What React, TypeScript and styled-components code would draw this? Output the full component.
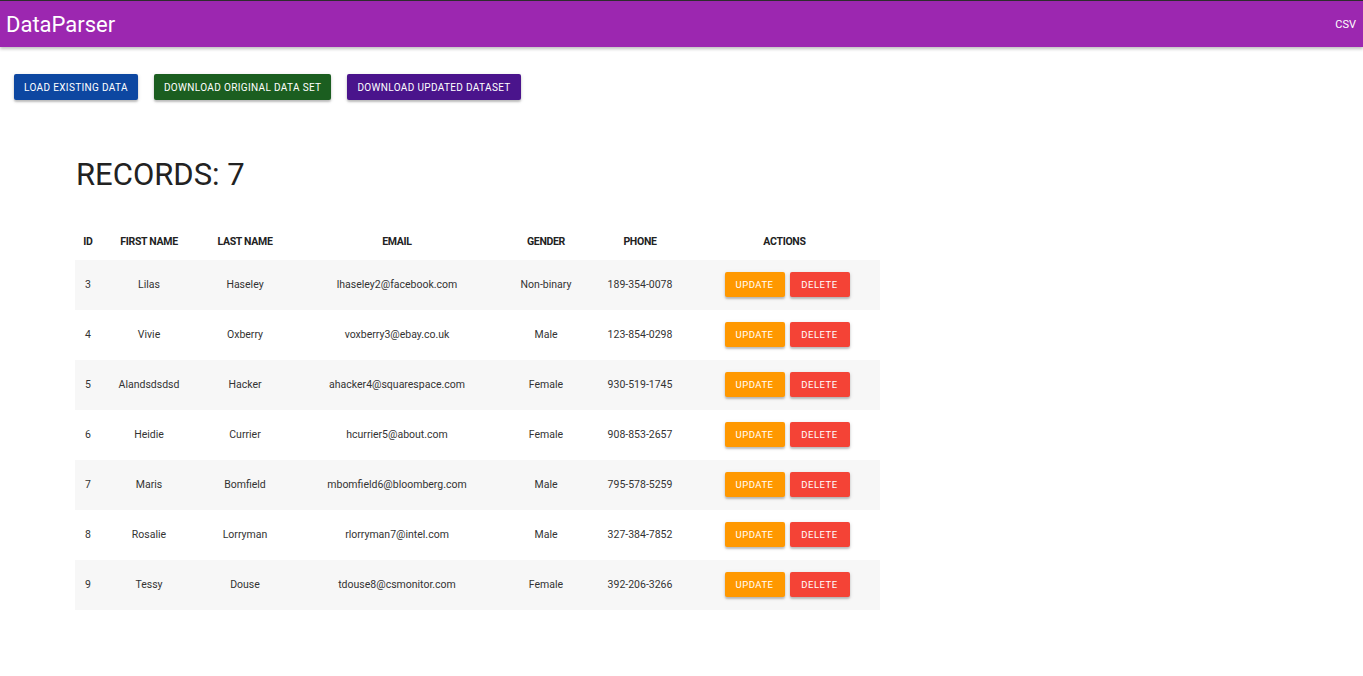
import styled, { createGlobalStyle } from "styled-components";

const GlobalStyle = createGlobalStyle`
  html, body {
    margin: 0;
    padding: 0;
    background: #ffffff;
    font-family: Roboto, "Noto Sans", sans-serif;
  }
`;

type Person = {
  id: number;
  firstName: string;
  lastName: string;
  email: string;
  gender: string;
  phone: string;
};

const records: Person[] = [
  { id: 3, firstName: "Lilas", lastName: "Haseley", email: "lhaseley2@facebook.com", gender: "Non-binary", phone: "189-354-0078" },
  { id: 4, firstName: "Vivie", lastName: "Oxberry", email: "voxberry3@ebay.co.uk", gender: "Male", phone: "123-854-0298" },
  { id: 5, firstName: "Alandsdsdsd", lastName: "Hacker", email: "ahacker4@squarespace.com", gender: "Female", phone: "930-519-1745" },
  { id: 6, firstName: "Heidie", lastName: "Currier", email: "hcurrier5@about.com", gender: "Female", phone: "908-853-2657" },
  { id: 7, firstName: "Maris", lastName: "Bomfield", email: "mbomfield6@bloomberg.com", gender: "Male", phone: "795-578-5259" },
  { id: 8, firstName: "Rosalie", lastName: "Lorryman", email: "rlorryman7@intel.com", gender: "Male", phone: "327-384-7852" },
  { id: 9, firstName: "Tessy", lastName: "Douse", email: "tdouse8@csmonitor.com", gender: "Female", phone: "392-206-3266" },
];

const columns = [
  { label: "ID", width: 26 },
  { label: "FIRST NAME", width: 96 },
  { label: "LAST NAME", width: 96 },
  { label: "EMAIL", width: 208 },
  { label: "GENDER", width: 90 },
  { label: "PHONE", width: 98 },
  { label: "ACTIONS", width: 191 },
];

const App = () => {
  return (
    <Page>
      <GlobalStyle />
      <AppBar>
        <Brand>DataParser</Brand>
        <NavLink>CSV</NavLink>
      </AppBar>
      <Toolbar>
        <RaisedButton tone="#0d47a1">Load existing data</RaisedButton>
        <RaisedButton tone="#1b5e20">Download original data set</RaisedButton>
        <RaisedButton tone="#4a148c">Download updated dataset</RaisedButton>
      </Toolbar>
      <Content>
        <Heading>RECORDS: {records.length}</Heading>
        <Table>
          <colgroup>
            {columns.map((c) => (
              <col key={c.label} style={{ width: c.width }} />
            ))}
          </colgroup>
          <thead>
            <tr>
              {columns.map((c) => (
                <HeadCell key={c.label}>{c.label}</HeadCell>
              ))}
            </tr>
          </thead>
          <tbody>
            {records.map((r) => (
              <Row key={r.id}>
                <Cell>{r.id}</Cell>
                <Cell>{r.firstName}</Cell>
                <Cell>{r.lastName}</Cell>
                <Cell>{r.email}</Cell>
                <Cell>{r.gender}</Cell>
                <Cell>{r.phone}</Cell>
                <Cell>
                  <Actions>
                    <SmallButton tone="#ff9800">Update</SmallButton>
                    <SmallButton tone="#f44336">Delete</SmallButton>
                  </Actions>
                </Cell>
              </Row>
            ))}
          </tbody>
        </Table>
      </Content>
    </Page>
  );
};

const Page = styled.div`
  min-height: 676px;
  border-top: 1px solid #2e2e2e;
  box-sizing: border-box;
`;

const AppBar = styled.header`
  height: 46px;
  background: #9c27b0;
  display: flex;
  align-items: center;
  justify-content: space-between;
  padding: 0 7px 0 6px;
  box-shadow: 0 2px 3px rgba(0, 0, 0, 0.25);
  color: #ffffff;
`;

const Brand = styled.div`
  font-size: 22px;
  font-weight: 400;
`;

const NavLink = styled.a`
  font-size: 11px;
  color: #ffffff;
`;

const Toolbar = styled.div`
  display: flex;
  gap: 16px;
  padding: 27px 14px 0;
`;

const RaisedButton = styled.button<{ tone: string }>`
  height: 26px;
  padding: 0 10px;
  border: none;
  border-radius: 2px;
  background: ${(p) => p.tone};
  color: #ffffff;
  font-family: Roboto, sans-serif;
  font-size: 10px;
  font-weight: 400;
  letter-spacing: 0.35px;
  text-transform: uppercase;
  box-shadow: 0 2px 2px rgba(0, 0, 0, 0.2), 0 1px 4px rgba(0, 0, 0, 0.12);
`;

const Content = styled.main`
  padding: 0 75px;
`;

const Heading = styled.h1`
  margin: 55px 0 0 1px;
  font-size: 31px;
  font-weight: 400;
  line-height: 40px;
  color: #222222;
`;

const Table = styled.table`
  margin-top: 27px;
  width: 805px;
  border-collapse: collapse;
  table-layout: fixed;
`;

const HeadCell = styled.th`
  height: 38px;
  padding: 0;
  font-size: 10.5px;
  font-weight: 700;
  letter-spacing: -0.3px;
  color: #222222;
  text-align: center;
  vertical-align: middle;
`;

const Row = styled.tr`
  height: 50px;
  &:nth-child(odd) {
    background: #f7f7f7;
  }
`;

const Cell = styled.td`
  padding: 0 0 1px;
  font-size: 10.5px;
  color: #333333;
  text-align: center;
  vertical-align: middle;
  white-space: nowrap;
`;

const Actions = styled.div`
  display: flex;
  justify-content: center;
  gap: 5px;
  padding-left: 5px;
`;

const SmallButton = styled.button<{ tone: string }>`
  height: 25px;
  width: 60px;
  padding: 0;
  border: none;
  border-radius: 2px;
  background: ${(p) => p.tone};
  color: #ffffff;
  font-family: Roboto, sans-serif;
  font-size: 9.5px;
  font-weight: 400;
  letter-spacing: 0.5px;
  text-transform: uppercase;
  box-shadow: 0 2px 2px rgba(0, 0, 0, 0.2), 0 1px 4px rgba(0, 0, 0, 0.12);
`;

export default App;
